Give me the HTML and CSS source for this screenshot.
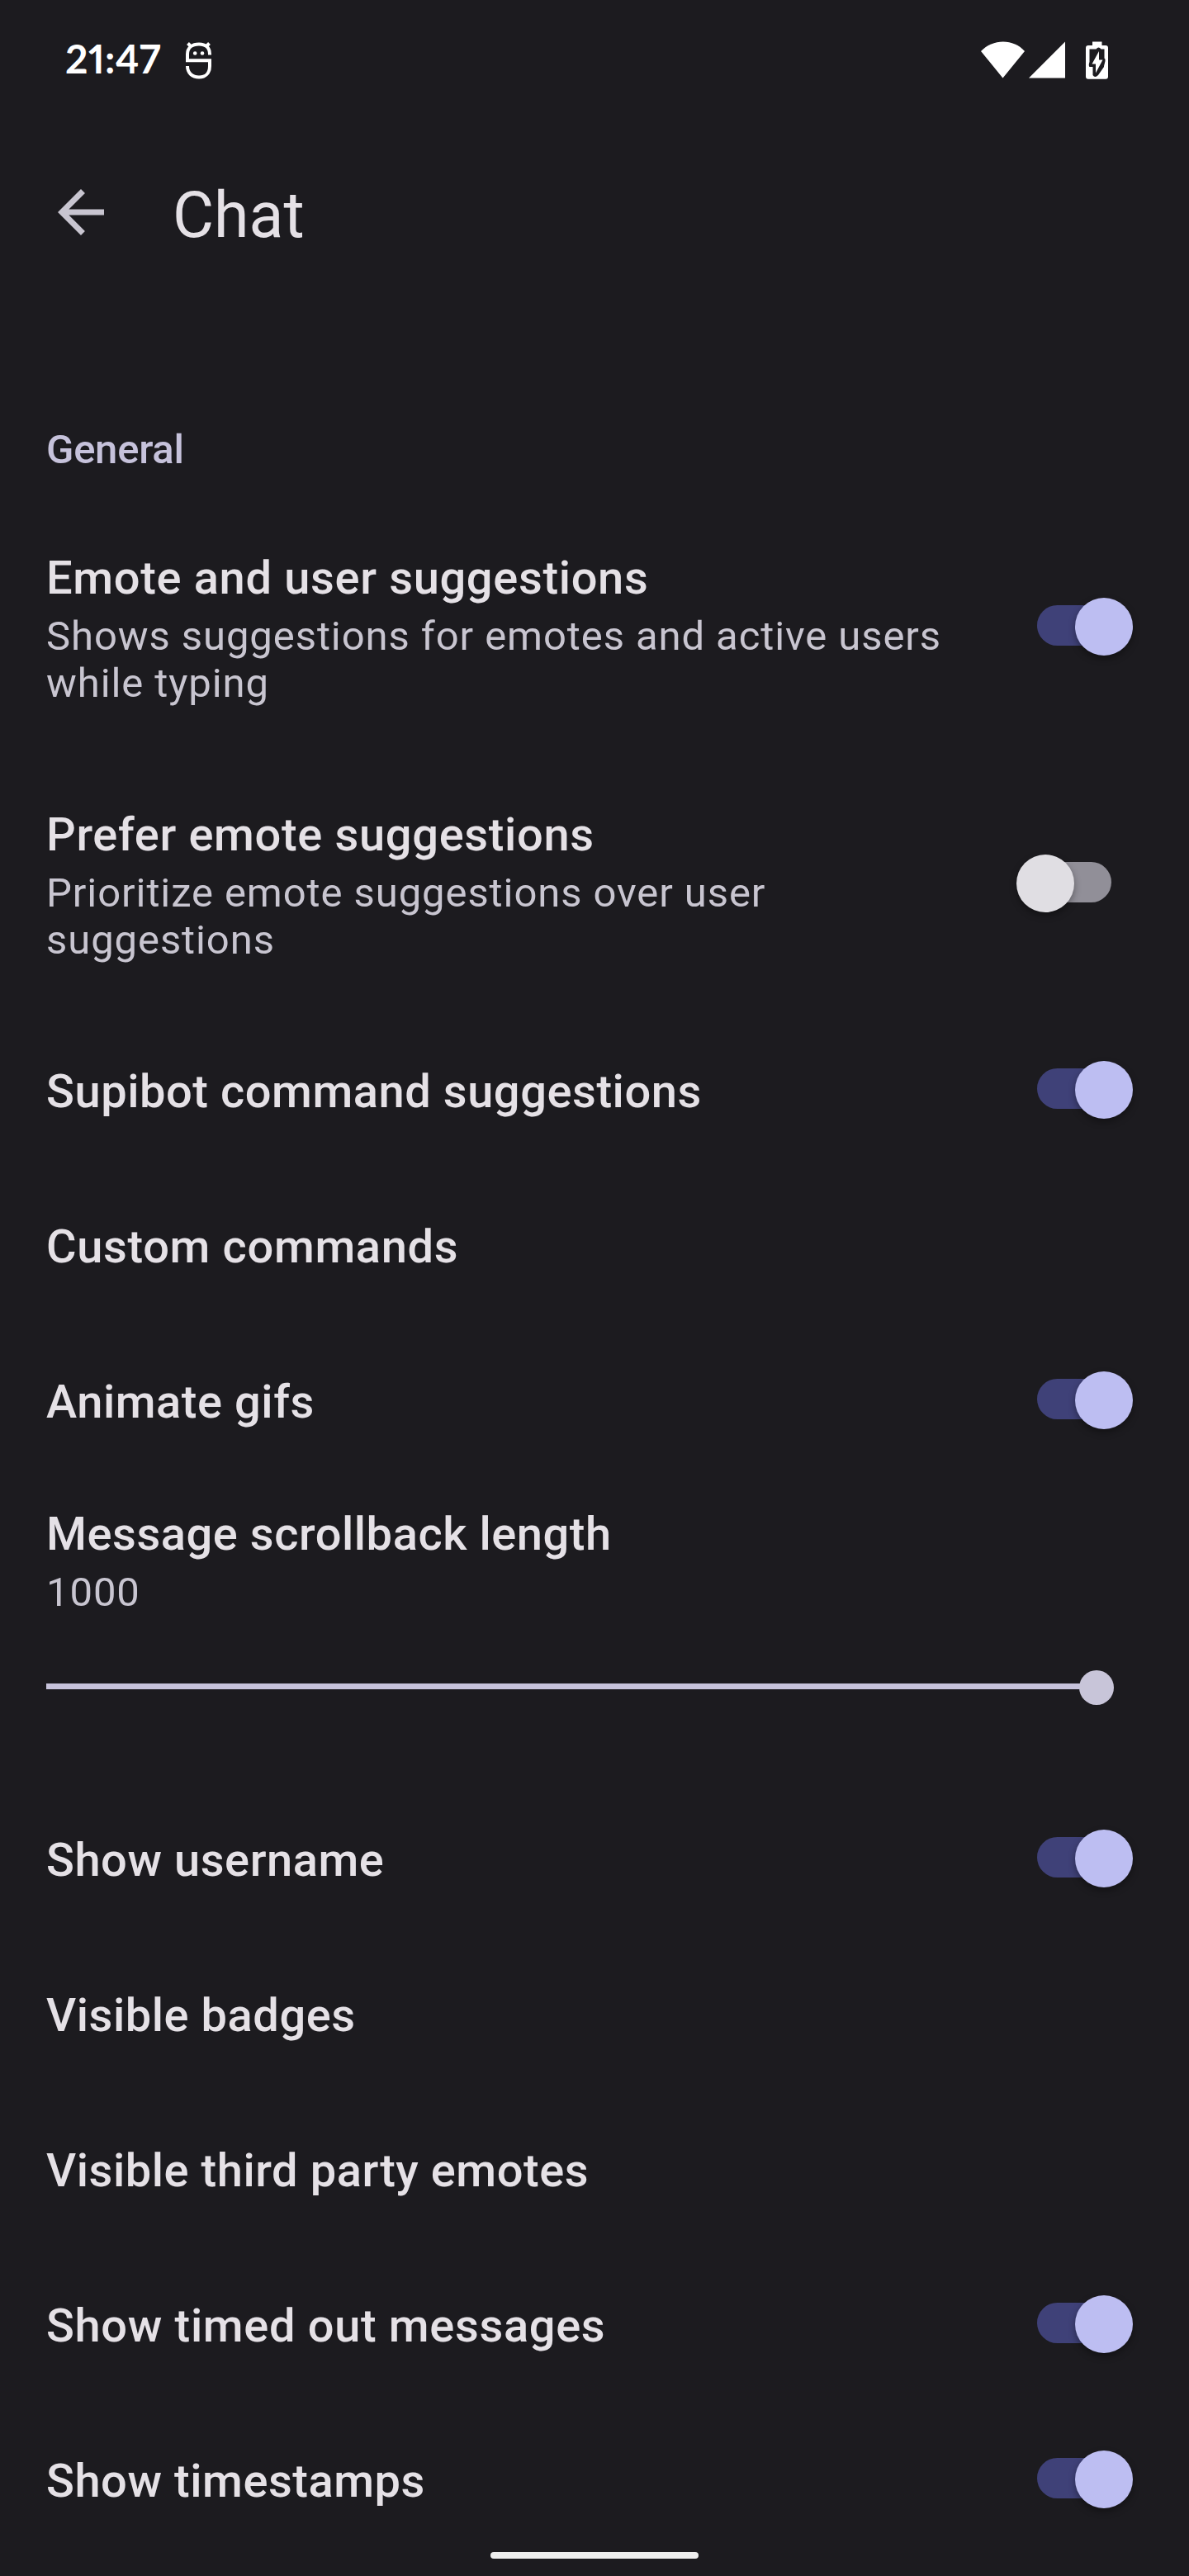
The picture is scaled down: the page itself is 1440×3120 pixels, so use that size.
FILE: index.html
```html
<!DOCTYPE html>
<html lang="en">
<head>
<meta charset="utf-8">
<title>Chat</title>
<link rel="stylesheet" href="styles.css">
</head>
<body>
<div class="screen">
  <header class="status-bar">
    <span class="clock">21:47</span>
    <svg class="notification-icon" width="32" height="46" viewBox="0 0 32 46" fill="none" stroke="#fff" stroke-width="4">
      <path d="M29 16.500V15.500C29 7.500 24 3.500 16 3.500S2 7.500 2 15.500V23.300H29V30C29 38.500 24 43.500 16 43.500S2 38.500 2 30"/>
      <path d="M2.500 2.500L7 7M28.500 2.500L24 7" stroke-width="4"/>
      <circle cx="11.200" cy="14.500" r="2.300" fill="#fff" stroke="none"/>
      <circle cx="20" cy="14.500" r="2.300" fill="#fff" stroke="none"/>
    </svg>
    <div class="system-icons">
      <svg class="wifi" width="54" height="45" viewBox="0 0 54 45" fill="#fff"><path d="M0 12C14-3.500 40-3.500 53 12L26.500 44.500Z"/></svg>
      <svg class="signal" width="44" height="45" viewBox="0 0 44 45" fill="#fff"><path d="M44 0.500V44.500H0Z"/></svg>
      <svg class="battery" width="28" height="46" viewBox="0 0 28 46">
        <path fill="#fff" d="M8 0.500H19.500V5H24Q27 5 27 8V42.500Q27 45.800 24 45.800H3Q0 45.800 0 42.500V8Q0 5 3 5H8Z"/>
        <path fill="#1c1b1f" d="M4.500 9.500H12.500Q15.500 5.500 18.500 9.500H22.500V20.500Q24 21 23.500 24L22 30V31L15 41Q11 45 8.500 41V31H4.500Q3 29 4.500 25Z"/>
        <path fill="#fff" d="M16 12V22.500H20.500L12 38.500V27.500H7.500Z"/>
      </svg>
    </div>
  </header>

  <div class="toolbar">
    <svg class="back" width="56" height="56" viewBox="0 0 16 16" fill="#c8c5d0"><path d="M16 7H3.830L9.420 1.410L8 0L0 8L8 16L9.410 14.590L3.830 9H16Z"/></svg>
    <h1 class="page-title">Chat</h1>
  </div>

  <main class="preferences">
    <h2 class="category">General</h2>
    <div class="row row-tall">
      <div class="text"><div class="title tracked">Emote and user suggestions</div><div class="summary">Shows suggestions for emotes and active users<br>while typing</div></div>
      <div class="switch on"><span class="thumb"></span></div>
    </div>
    <div class="row row-tall">
      <div class="text"><div class="title tracked">Prefer emote suggestions</div><div class="summary">Prioritize emote suggestions over user<br>suggestions</div></div>
      <div class="switch off"><span class="thumb"></span></div>
    </div>
    <div class="row"><div class="title">Supibot command suggestions</div><div class="switch on"><span class="thumb"></span></div></div>
    <div class="row"><div class="title tracked">Custom commands</div></div>
    <div class="row"><div class="title">Animate gifs</div><div class="switch on"><span class="thumb"></span></div></div>
    <div class="row-slider">
      <div class="title">Message scrollback length</div>
      <div class="summary">1000</div>
      <div class="slider"><span class="track"></span><span class="knob"></span></div>
    </div>
    <div class="row"><div class="title">Show username</div><div class="switch on"><span class="thumb"></span></div></div>
    <div class="row"><div class="title">Visible badges</div></div>
    <div class="row"><div class="title">Visible third party emotes</div></div>
    <div class="row"><div class="title tracked">Show timed out messages</div><div class="switch on"><span class="thumb"></span></div></div>
    <div class="row"><div class="title">Show timestamps</div><div class="switch on"><span class="thumb"></span></div></div>
  </main>
  <div class="nav-handle"></div>
</div>
</body>
</html>
```
FILE: styles.css
```css
* { box-sizing: border-box; }

body {
  margin: 0;
  background: #1c1b1f;
  color: #e5e1e6;
  font-family: Roboto, "Liberation Sans", sans-serif;
}

.screen {
  position: relative;
  width: 1440px;
  height: 3120px;
  overflow: hidden;
}

.status-bar {
  display: flex;
  align-items: flex-start;
  height: 145px;
  padding: 50px 97px 0 79px;
  color: #fff;
}

.clock {
  width: 146px;
  font-family: Lato, sans-serif;
  font-feature-settings: "pnum";
  font-size: 48px;
  font-weight: 700;
  line-height: 42px;
  letter-spacing: 0.4px;
}

.notification-icon { overflow: visible; }

.system-icons {
  display: flex;
  margin-left: auto;
}

.signal { margin-left: 4px; }
.battery { margin-left: 25px; }

.toolbar {
  display: flex;
  align-items: flex-start;
  height: 343px;
  padding: 84px 70px 0;
}

.page-title {
  margin: -13px 0 0 83px;
  font-size: 77px;
  font-weight: 400;
  line-height: 90px;
}

.category {
  height: 119px;
  margin: 0;
  padding: 26px 56px 0;
  color: #c6c2db;
  font-size: 49px;
  font-weight: 500;
  line-height: 61px;
  letter-spacing: -0.25px;
}

.row {
  display: flex;
  align-items: flex-start;
  height: 188px;
  padding: 56px 68px 0 56px;
}

.row-tall { height: 311px; }

.title {
  font-size: 56px;
  font-weight: 500;
  line-height: 74px;
  letter-spacing: 0.55px;
}

.tracked { letter-spacing: 0.66px; }

.summary {
  margin-top: 5px;
  color: #c8c5d0;
  font-size: 49px;
  line-height: 57px;
  letter-spacing: 0.915px;
}

.switch {
  display: flex;
  align-items: center;
  width: 90px;
  height: 49px;
  margin: 9px 26px 0 auto;
  border-radius: 25px;
}

.row-tall .switch { margin-top: 70px; }

.thumb {
  flex: none;
  width: 70px;
  height: 70px;
  margin-top: 2px;
  border-radius: 50%;
  box-shadow: 0 4px 8px rgba(0, 0, 0, 0.35);
}

.on { background: #3f4178; }
.on .thumb { margin-left: 46px; background: #bdbef2; }
.off { background: #918f98; }
.off .thumb { margin-left: -25px; background: #e0dee3; }

.row-slider {
  height: 367px;
  padding: 28px 56px 0;
}

.slider {
  display: flex;
  align-items: center;
  height: 41px;
  margin-top: 65px;
}

.track {
  width: 1252px;
  height: 7px;
  background: #c7c3db;
}

.knob {
  flex: none;
  width: 42px;
  height: 42px;
  margin: 2px 0 0 -1.5px;
  border-radius: 50%;
  background: #c8c5d9;
}

.nav-handle {
  position: absolute;
  left: 594px;
  top: 3091px;
  width: 252px;
  height: 8px;
  border-radius: 4px;
  background: #eee;
}
```
